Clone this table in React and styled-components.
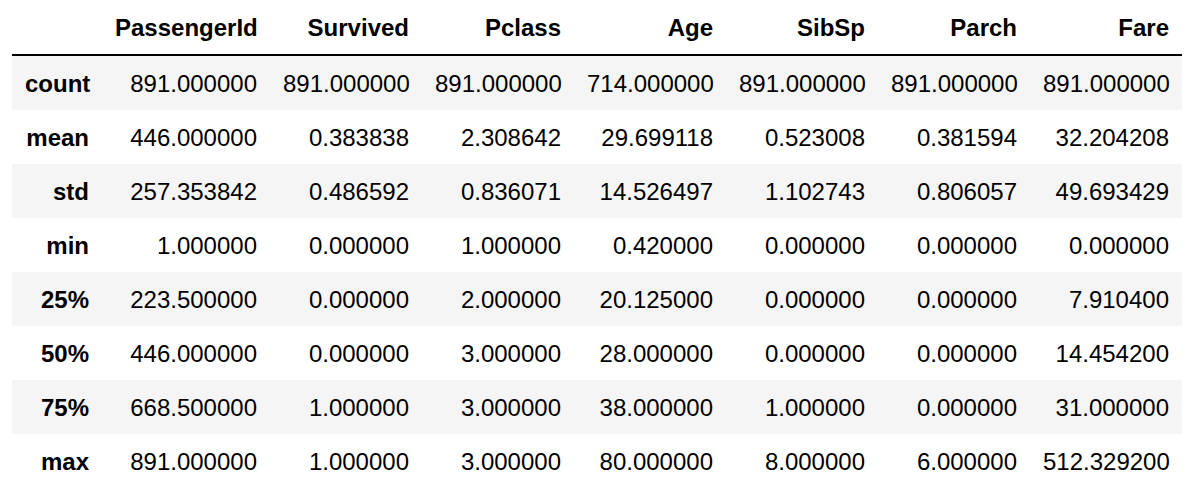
import React from "react";
import styled, { createGlobalStyle } from "styled-components";

const GlobalStyle = createGlobalStyle`
  body {
    margin: 0;
    background: #fff;
    font-family: "Liberation Sans", Arial, Helvetica, sans-serif;
  }
`;

const Wrapper = styled.div`
  padding: 0 12px;
`;

const Table = styled.table`
  width: 1170px;
  border-collapse: collapse;
  border-spacing: 0;
  table-layout: fixed;
  font-size: 24px;
  color: #000;
`;

const HeadRow = styled.tr`
  border-bottom: 2px solid #000;
`;

const Row = styled.tr`
  background: ${(p) => (p.$striped ? "#f5f5f5" : "#fff")};
`;

const HeadCell = styled.th`
  height: 52px;
  padding: 2px 13px 0;
  text-align: right;
  font-weight: bold;
  line-height: 1;
  white-space: nowrap;
`;

const IndexCell = styled.th`
  height: 52px;
  padding: 2px 13px 0;
  text-align: right;
  font-weight: bold;
  line-height: 1;
`;

const Cell = styled.td`
  height: 52px;
  padding: 2px 13px 0;
  text-align: right;
  line-height: 1;
  white-space: nowrap;
`;

const columns = ["PassengerId", "Survived", "Pclass", "Age", "SibSp", "Parch", "Fare"];

const rows = [
  ["count", "891.000000", "891.000000", "891.000000", "714.000000", "891.000000", "891.000000", "891.000000"],
  ["mean", "446.000000", "0.383838", "2.308642", "29.699118", "0.523008", "0.381594", "32.204208"],
  ["std", "257.353842", "0.486592", "0.836071", "14.526497", "1.102743", "0.806057", "49.693429"],
  ["min", "1.000000", "0.000000", "1.000000", "0.420000", "0.000000", "0.000000", "0.000000"],
  ["25%", "223.500000", "0.000000", "2.000000", "20.125000", "0.000000", "0.000000", "7.910400"],
  ["50%", "446.000000", "0.000000", "3.000000", "28.000000", "0.000000", "0.000000", "14.454200"],
  ["75%", "668.500000", "1.000000", "3.000000", "38.000000", "1.000000", "0.000000", "31.000000"],
  ["max", "891.000000", "1.000000", "3.000000", "80.000000", "8.000000", "6.000000", "512.329200"],
];

export default function App() {
  return (
    <Wrapper>
      <GlobalStyle />
      <Table>
        <colgroup>
          <col style={{ width: 90 }} />
          <col style={{ width: 168 }} />
          {columns.slice(1).map((c) => (
            <col key={c} style={{ width: 152 }} />
          ))}
        </colgroup>
        <thead>
          <HeadRow>
            <HeadCell />
            {columns.map((c) => (
              <HeadCell key={c}>{c}</HeadCell>
            ))}
          </HeadRow>
        </thead>
        <tbody>
          {rows.map(([label, ...vals], i) => (
            <Row key={label} $striped={i % 2 === 0}>
              <IndexCell>{label}</IndexCell>
              {vals.map((v, j) => (
                <Cell key={j}>{v}</Cell>
              ))}
            </Row>
          ))}
        </tbody>
      </Table>
    </Wrapper>
  );
}
